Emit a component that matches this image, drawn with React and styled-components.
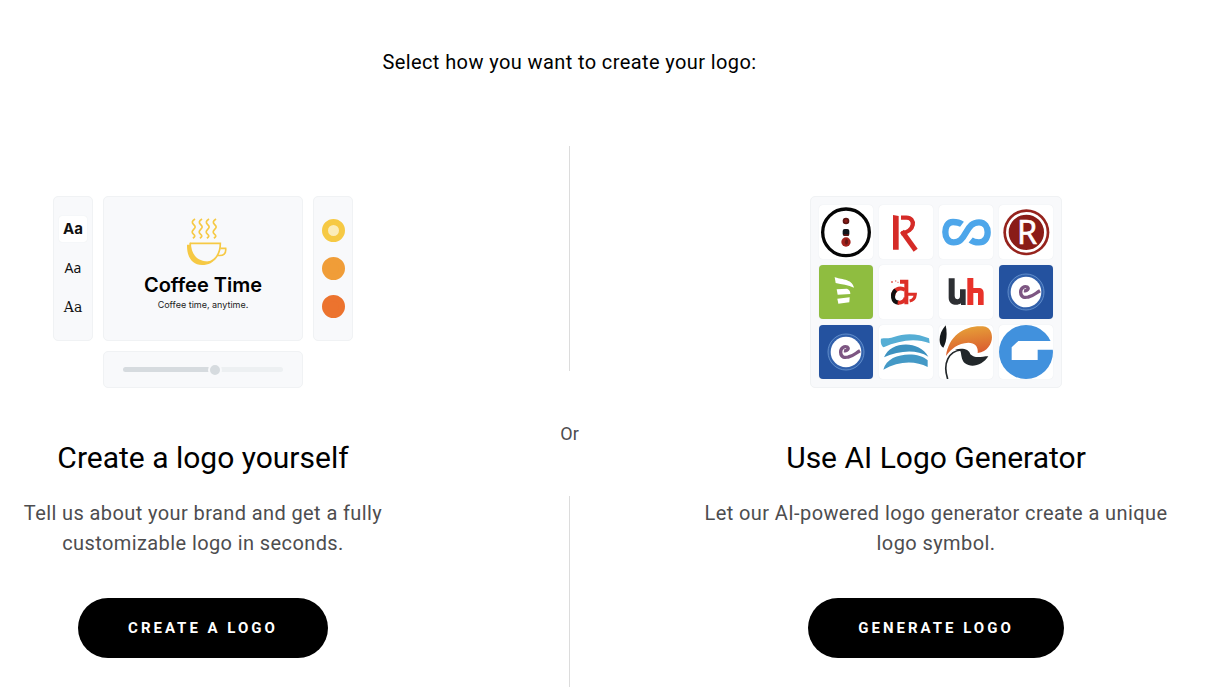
import React from "react";
import styled, { createGlobalStyle } from "styled-components";

const App = () => {
  return (
    <>
      <GlobalStyle />
      <Page>
        <Title>Select how you want to create your logo:</Title>
        <Options>
          <Option>
            <Editor>
              <FontPanel>
                <FontSample $active>Aa</FontSample>
                <FontSample $family='"Noto Sans", sans-serif'>Aa</FontSample>
                <FontSample $family='"DejaVu Serif", serif'>Aa</FontSample>
              </FontPanel>
              <Preview>
                <CoffeeCup />
                <BrandName>Coffee Time</BrandName>
                <Slogan>Coffee time, anytime.</Slogan>
              </Preview>
              <ColorPanel>
                <Swatch $color="#f6c944" $active />
                <Swatch $color="#f09d38" />
                <Swatch $color="#ec732e" />
              </ColorPanel>
              <SliderPanel>
                <Slider
                  type="range"
                  min="0"
                  max="100"
                  defaultValue="58"
                  aria-label="Logo size"
                />
              </SliderPanel>
            </Editor>
            <Heading>Create a logo yourself</Heading>
            <Text>
              Tell us about your brand and get a fully customizable logo in
              seconds.
            </Text>
            <Button type="button">Create a logo</Button>
          </Option>

          <Divider>
            <Line $height="225px" />
            <Or>Or</Or>
            <Line />
          </Divider>

          <Option>
            <Gallery>
              {logos.map(({ id, color, Logo }) => (
                <Tile key={id} $color={color}>
                  <svg viewBox="0 0 162 162" aria-hidden="true">
                    <Logo />
                  </svg>
                </Tile>
              ))}
            </Gallery>
            <Heading>Use AI Logo Generator</Heading>
            <Text>
              Let our AI-powered logo generator create a unique logo symbol.
            </Text>
            <Button type="button">Generate logo</Button>
          </Option>
        </Options>
      </Page>
    </>
  );
};

export default App;

const CoffeeCup = () => (
  <CupIcon viewBox="0 0 123 141" fill="none" stroke="#f6c944" aria-hidden="true">
    {[23, 44, 65, 86].map((x) => (
      <path
        key={x}
        d={`M${x + 4} 3 C${x - 6} 10 ${x - 6} 14 ${x} 20 S${x + 6} 28 ${x} 34 S${x - 6} 44 ${x} 49 S${x + 3} 56 ${x - 2} 61`}
        strokeWidth="5"
      />
    ))}
    <path d="M12 76 H103 C103 112 84 134 54 134" strokeWidth="5" />
    <path
      d="M3 80 H10 L10 74 H15 C15 106 30 128 64 131 C76 131 86 126 92 119 C82 133 68 141 48 141 C18 141 2 116 3 80Z"
      fill="#f6c944"
      stroke="none"
    />
    <path d="M103 91 H119 C121 106 113 115 95 112" strokeWidth="5" />
  </CupIcon>
);

const Capsule = () => (
  <>
    <circle cx="81" cy="82" r="70" fill="none" stroke="#050505" strokeWidth="10" />
    <circle cx="81" cy="48" r="10" fill="#5c1512" />
    <circle cx="81" cy="48" r="5" fill="#8a1d18" />
    <rect x="71" y="72" width="20" height="21" rx="6" fill="#11161c" />
    <path d="M73 88 H91 L88 93 H75Z" fill="#5c1512" />
    <circle cx="81" cy="111" r="14" fill="#a3211b" />
    <path d="M81 101 L87 106 V115 L81 120 L77 112Z" fill="#6a1714" />
  </>
);

const RedStencil = () => (
  <>
    <path d="M42 30 L59 33 V134 H42Z" fill="#d52b27" />
    <g fill="none" stroke="#d52b27" strokeWidth="13">
      <path d="M66 38 H82 C111 38 109 80 67 85" />
      <path d="M69 79 L110 136" strokeWidth="15" />
    </g>
  </>
);

const Loop = () => (
  <path
    d="M69 58 C61 52 52 51 42 51 C26 51 19 65 19 81 C19 98 28 112 44 112 C62 112 70 102 80 84 C91 64 101 52 120 52 C138 52 146 66 146 82 C146 100 136 112 120 112 C110 112 102 111 95 105"
    fill="none"
    stroke="#4da6ea"
    strokeWidth="19"
  />
);

const Registered = () => (
  <>
    <circle cx="82" cy="82" r="69" fill="#96231d" />
    <circle cx="82" cy="82" r="57" fill="#8a1c17" stroke="#fff" strokeWidth="8" />
    <text
      x="84"
      y="117"
      fill="#fff"
      stroke="#fff"
      strokeWidth="2"
      fontFamily="Open Sans, sans-serif"
      fontSize="98"
      textAnchor="middle"
    >
      R
    </text>
  </>
);

const Leaf = () => (
  <g fill="#fff">
    <path d="M47 36 C62 44 100 40 105 68 C88 60 68 58 50 54Z" />
    <path d="M53 73 L84 71 C92 74 94 80 94 87 L56 89Z" />
    <path d="M55 101 L92 97 L91 112 L58 116Z" />
  </g>
);

const RedMonogram = () => (
  <>
    <g fill="none" strokeWidth="12">
      <path d="M78 74 C60 64 42 76 42 94" stroke="#dd2f27" />
      <path d="M50 75 C38 86 38 112 60 113" stroke="#111" />
      <path d="M56 113 C68 114 78 108 80 98" stroke="#dd2f27" />
      <path d="M63 50 H82 V118" stroke="#dd2f27" />
      <path d="M84 88 H109 C108 100 102 106 92 108" stroke="#dd2f27" strokeWidth="9" />
    </g>
    <path d="M36 48 h6 v6 h-6z M48 46 h4 v4 h-4z M55 50 h4 v4 h-4z" fill="#eb8b84" />
  </>
);

const BlockPair = () => (
  <>
    <path
      d="M29 40 H47 V92 C47 106 63 106 63 94 V73 H80 V120 H66 V115 C54 124 29 120 29 98Z"
      fill="#2d2f33"
    />
    <path
      d="M85 39 H103 V69 H118 C130 69 134 75 134 86 V120 H117 V84 H103 V120 H85Z"
      fill="#e8322a"
    />
  </>
);

const BlueSeal = () => (
  <>
    <circle cx="81" cy="81" r="54" fill="#3160ab" stroke="#7ba8dc" strokeWidth="2" />
    <circle cx="81" cy="81" r="46" fill="#fff" />
    <path
      d="M75 77 C84 79 92 71 85 66 C76 62 64 69 65 82 C66 97 76 99 88 96 C104 93 110 84 123 77"
      fill="none"
      stroke="#7d5682"
      strokeWidth="10"
    />
  </>
);

const Waves = () => (
  <>
    <path
      d="M6 41 C20 38 28 42 42 37 C80 22 118 26 150 40 L152 55 C110 38 60 46 14 67 C6 62 4 50 6 41Z"
      fill="#56aed5"
    />
    <path d="M15 97 C34 48 120 44 148 95 C112 72 62 76 15 97Z" fill="#3d92c0" />
    <path
      d="M13 134 C26 82 116 78 146 106 V126 C108 106 58 108 13 134Z"
      fill="#4499c6"
    />
  </>
);

const Phoenix = () => (
  <>
    <defs>
      <linearGradient id="flame" x1="0.5" y1="0" x2="0.7" y2="1">
        <stop offset="0" stopColor="#e6a038" />
        <stop offset="1" stopColor="#d9532e" />
      </linearGradient>
    </defs>
    <path d="M20 1 C26 28 22 52 13 68 C-2 60 -4 28 20 1Z" fill="#15191c" />
    <path
      d="M21 93 C30 28 82 -2 140 5 C170 16 166 76 116 84 C118 66 110 54 88 53 C56 55 38 70 21 93Z"
      fill="url(#flame)"
    />
    <path
      d="M26 162 C10 114 30 78 66 75"
      fill="none"
      stroke="#22272a"
      strokeWidth="5"
    />
    <path
      d="M48 74 C70 68 90 72 94 88 C108 102 128 94 148 94 C132 120 98 130 78 115 C66 104 68 88 64 78Z"
      fill="#22272a"
    />
  </>
);

const BlueDisc = () => (
  <>
    <circle cx="81" cy="81" r="81" fill="#4191dd" />
    <path d="M58 48 H162 V74 H116 V105 H38 V67Z" fill="#fff" />
  </>
);

const logos = [
  { id: "capsule", Logo: Capsule },
  { id: "stencil", Logo: RedStencil },
  { id: "loop", Logo: Loop },
  { id: "registered", Logo: Registered },
  { id: "leaf", color: "#8fbd40", Logo: Leaf },
  { id: "monogram", Logo: RedMonogram },
  { id: "blocks", Logo: BlockPair },
  { id: "seal", color: "#24529f", Logo: BlueSeal },
  { id: "seal-2", color: "#24529f", Logo: BlueSeal },
  { id: "waves", Logo: Waves },
  { id: "phoenix", Logo: Phoenix },
  { id: "disc", Logo: BlueDisc },
];

const GlobalStyle = createGlobalStyle`
  * {
    box-sizing: border-box;
  }

  body {
    margin: 0;
    background: #fff;
    font-family: Roboto, sans-serif;
    overflow-x: hidden;
  }
`;

const Page = styled.main`
  min-height: 100vh;
  margin-left: -67px;
  padding-top: 47px;
  display: flex;
  flex-direction: column;
`;

const Title = styled.h1`
  margin: 0 0 69px;
  font-size: 20px;
  font-weight: 400;
  line-height: 30px;
  letter-spacing: 0.02em;
  text-align: center;
  color: #000;
`;

const Options = styled.div`
  flex: 1;
  display: grid;
  grid-template-columns: minmax(0, 470px) 263px minmax(0, 470px);
  justify-content: center;
`;

const Option = styled.section`
  padding: 50px 0 29px;
  display: flex;
  flex-direction: column;
  align-items: center;
  text-align: center;
`;

const Heading = styled.h2`
  margin: 50px 0 20px;
  font-size: 30px;
  font-weight: 400;
  line-height: 40px;
  color: #000;
`;

const Text = styled.p`
  margin: 0 0 40px;
  font-size: 20px;
  line-height: 30px;
  letter-spacing: 0.02em;
  color: #4d4d4f;
`;

const Button = styled.button`
  height: 60px;
  padding: 0 50px;
  border: 0;
  border-radius: 30px;
  background: #000;
  color: #fff;
  font-family: inherit;
  font-size: 15px;
  font-weight: 700;
  letter-spacing: 3px;
  text-transform: uppercase;
  cursor: pointer;
`;

const Divider = styled.div`
  display: flex;
  flex-direction: column;
  align-items: center;
`;

const Line = styled.div`
  width: 1px;
  background: #dcdcdc;
  flex: ${({ $height }) => ($height ? `0 0 ${$height}` : "1")};
`;

const Or = styled.span`
  font-size: 18px;
  line-height: 125px;
  color: #4d4d4f;
`;

const Panel = styled.div`
  background: #f8f9fb;
  border: 1px solid #f0f2f4;
  border-radius: 5px;
`;

const Editor = styled.div`
  display: grid;
  grid-template-columns: 40px 200px 40px;
  grid-template-rows: 145px 37px;
  gap: 10px;
`;

const FontPanel = styled(Panel)`
  display: flex;
  flex-direction: column;
  align-items: center;
  padding-top: 19px;
  gap: 13px;
`;

const FontSample = styled.span`
  width: 28px;
  height: 26px;
  border-radius: 3px;
  line-height: 26px;
  text-align: center;
  color: #111;
  font-family: ${({ $family }) => $family || "Inter, sans-serif"};
  font-size: ${({ $active }) => ($active ? "15px" : "14px")};
  font-weight: ${({ $active }) => ($active ? 700 : 400)};
  background: ${({ $active }) => ($active ? "#fff" : "none")};
  box-shadow: ${({ $active }) => ($active ? "0 0 1px #dfe3e6" : "none")};
`;

const Preview = styled(Panel)`
  display: flex;
  flex-direction: column;
  align-items: center;
  padding-top: 21px;
`;

const CupIcon = styled.svg`
  width: 41px;
  height: 47px;
  margin-left: 6px;
`;

const BrandName = styled.strong`
  margin-top: 8px;
  font-family: Inter, sans-serif;
  font-size: 20px;
  font-weight: 600;
  line-height: 24px;
  color: #000;
`;

const Slogan = styled.span`
  font-family: Inter, sans-serif;
  font-size: 9px;
  line-height: 16px;
  color: #222;
`;

const ColorPanel = styled(Panel)`
  display: flex;
  flex-direction: column;
  align-items: center;
  padding-top: 22px;
  gap: 15px;
`;

const Swatch = styled.span`
  width: 23px;
  height: 23px;
  border-radius: 50%;
  border: 6px solid ${({ $color }) => $color};
  background: ${({ $active, $color }) => ($active ? "#fbecb9" : $color)};
`;

const SliderPanel = styled(Panel)`
  grid-column: 2;
  display: flex;
  align-items: center;
  padding: 0 19px;
`;

const Slider = styled.input`
  appearance: none;
  width: 100%;
  height: 5px;
  margin: 0;
  border-radius: 3px;
  background: linear-gradient(to right, #d6dbdf 58%, #edf0f2 58%);

  &::-webkit-slider-thumb {
    appearance: none;
    width: 14px;
    height: 14px;
    border: 2px solid #f8f9fb;
    border-radius: 50%;
    background: #d6dbdf;
  }
`;

const Gallery = styled(Panel)`
  display: grid;
  grid-template-columns: repeat(4, 54px);
  grid-auto-rows: 54px;
  gap: 6px;
  padding: 8px;
`;

const Tile = styled.div`
  border-radius: 4px;
  overflow: hidden;
  background: ${({ $color }) => $color || "#fff"};
  box-shadow: 0 0 1px #dfe3e6;

  svg {
    display: block;
    width: 100%;
    height: 100%;
  }
`;
